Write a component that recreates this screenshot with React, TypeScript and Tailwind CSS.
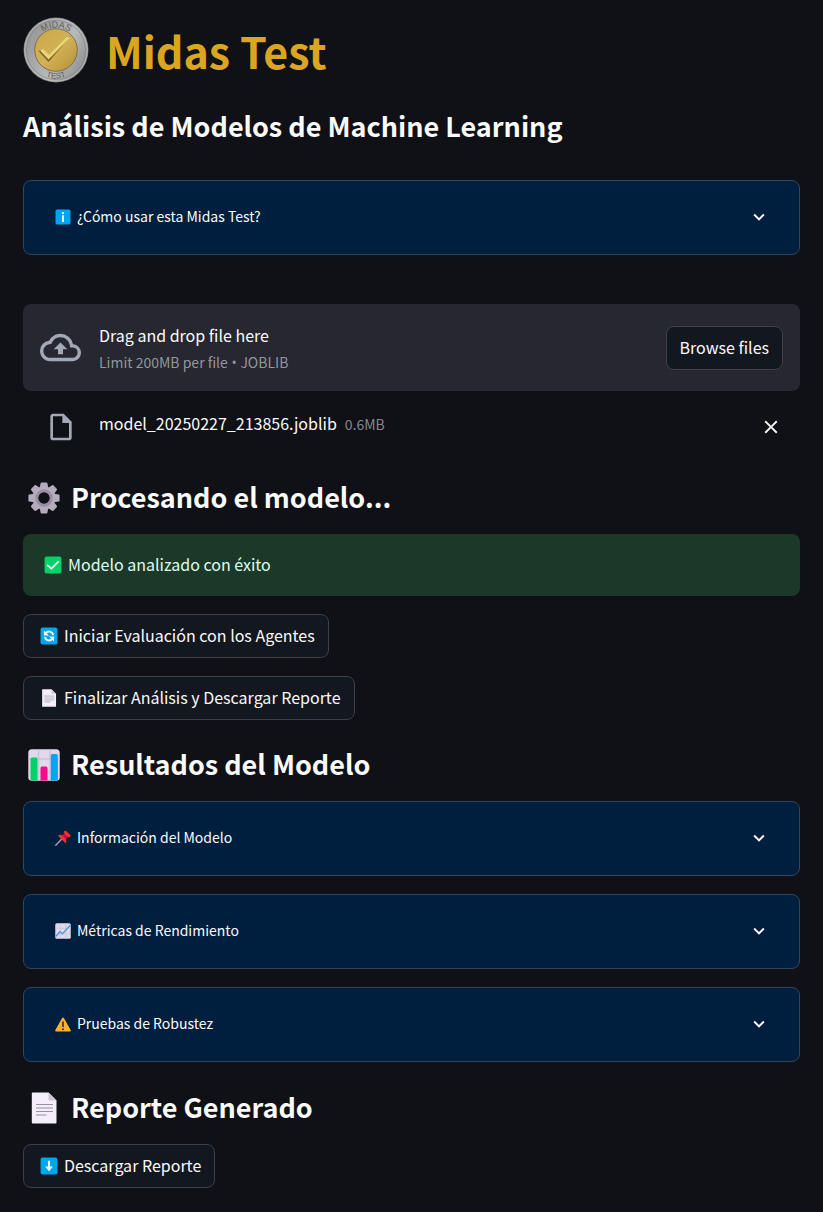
import { useState, type ReactNode } from "react";

type IconProps = { className?: string };

function Coin() {
  return (
    <svg viewBox="0 0 66 66" className="size-[66px] shrink-0" role="img" aria-label="Midas Test">
      <defs>
        <linearGradient id="silver" x1="0" y1="0.2" x2="1" y2="0.8">
          <stop offset="0" stopColor="#929394" />
          <stop offset="0.6" stopColor="#b9babb" />
          <stop offset="1" stopColor="#8b8c8d" />
        </linearGradient>
        <linearGradient id="gold" x1="0" y1="0" x2="1" y2="1">
          <stop offset="0" stopColor="#c9a548" />
          <stop offset="0.5" stopColor="#d2b257" />
          <stop offset="1" stopColor="#b48f37" />
        </linearGradient>
        <path id="arcTop" d="M10.500 33a22.500 22.500 0 0 1 45 0" />
        <path id="arcBottom" d="M4.500 33a28.500 28.500 0 0 0 57 0" />
      </defs>
      <circle cx="33" cy="33" r="32.500" fill="#77797a" />
      <circle cx="33" cy="33" r="31.300" fill="url(#silver)" stroke="#c6c7c8" strokeWidth="0.800" />
      <circle cx="33" cy="33" r="29.500" fill="none" stroke="#858688" strokeWidth="0.700" />
      <circle cx="33" cy="33" r="21.300" fill="url(#gold)" stroke="#766b48" strokeWidth="0.900" />
      <path d="M15.500 34l3.500-1.500 6.500 7L43 20.500l4.500-1L25.500 45z" fill="#7d622a" />
      <path d="M17 33.500l3-1.800 6 6.200L43.500 20l4 .2L25.500 42.500z" fill="#ead672" />
      <g fill="#5c5e60" fontFamily="Liberation Sans, sans-serif" fontSize="9" textAnchor="middle">
        <text><textPath href="#arcTop" startOffset="50%">MIDAS</textPath></text>
        <text fontSize="8"><textPath href="#arcBottom" startOffset="50%">TEST</textPath></text>
      </g>
    </svg>
  );
}

function InfoIcon({ className }: IconProps) {
  return (
    <svg viewBox="0 0 32 32" className={className} aria-hidden="true">
      <rect x="1" y="1" width="30" height="30" rx="3.500" fill="#00a6ed" />
      <path d="M14.200 6h3.800v4h-3.800zM14.200 12.500h3.800V26h-3.800z" fill="#fff" />
    </svg>
  );
}

function GearIcon({ className }: IconProps) {
  return (
    <svg viewBox="0 0 32 32" className={className} aria-hidden="true">
      <g fill="#b4acbc">
        {[0, 45, 90, 135].map((angle) => (
          <path
            key={angle}
            d="M13.600.4h4.800a1 1 0 0 1 1 .8L20.600 8v16l-1.200 6.800a1 1 0 0 1-1 .8h-4.800a1 1 0 0 1-1-.8L11.400 24V8l1.200-6.800a1 1 0 0 1 1-.8z"
            transform={`rotate(${angle} 16 16)`}
          />
        ))}
        <circle cx="16" cy="16" r="11.500" />
      </g>
      <circle cx="16" cy="16" r="7.200" fill="#101116" stroke="#998ea4" strokeWidth="3" />
    </svg>
  );
}

function CheckIcon({ className }: IconProps) {
  return (
    <svg viewBox="0 0 32 32" className={className} aria-hidden="true">
      <rect x="1" y="1" width="30" height="30" rx="3.500" fill="#00d26a" />
      <path d="M6.500 16.500l6.500 6 12.500-12.500" fill="none" stroke="#fff" strokeWidth="3" strokeLinecap="round" strokeLinejoin="round" />
    </svg>
  );
}

function RefreshIcon({ className }: IconProps) {
  return (
    <svg viewBox="0 0 32 32" className={className} aria-hidden="true">
      <rect x="1" y="1" width="30" height="30" rx="3.500" fill="#00a6ed" />
      <g fill="none" stroke="#fff" strokeWidth="3.400">
        <path d="M10.500 10.500c4-4 11-3 13 3.500" />
        <path d="M21.500 21.500c-4 4-11 3-13-3.500" />
      </g>
      <path d="M7 6v9h9zM25 26v-9h-9z" fill="#fff" />
    </svg>
  );
}

function PageIcon({ className }: IconProps) {
  return (
    <svg viewBox="0 0 32 32" className={className} aria-hidden="true">
      <path d="M4.800.5h15.700L28.500 8.500v22a1 1 0 0 1-1 1H4.800a1 1 0 0 1-1-1v-29a1 1 0 0 1 1-1z" fill="#f3eef8" />
      <path d="M20.500.5l8 8h-7a1 1 0 0 1-1-1z" fill="#cdc4d6" />
      <path d="M8.500 12.500h16M8.500 16h16M8.500 19.500h16M8.500 23h9.500" stroke="#998ea4" strokeWidth="1.100" strokeLinecap="round" />
    </svg>
  );
}

function BarsIcon({ className }: IconProps) {
  return (
    <svg viewBox="0 0 32 32" className={className} aria-hidden="true">
      <rect x=".3" y=".3" width="31.400" height="31.400" rx="3.500" fill="#e1d8ec" />
      <path d="M10.500.5v31M22 .5v31M.5 10h31M.5 22.500h31" stroke="#cdc4d6" strokeWidth="1.500" />
      <path d="M2.500 31.500V10a1.500 1.500 0 0 1 1.500-1.500h4A1.500 1.500 0 0 1 9.500 10v21.500z" fill="#00d26a" />
      <path d="M12.500 31.500V19a1.500 1.500 0 0 1 1.500-1.500h4a1.500 1.500 0 0 1 1.500 1.500v12.500z" fill="#f70a8d" />
      <path d="M22.800 31.500V6.500A1.500 1.500 0 0 1 24.300 5h4a1.500 1.500 0 0 1 1.500 1.500v25z" fill="#00a6ed" />
    </svg>
  );
}

function PinIcon({ className }: IconProps) {
  return (
    <svg viewBox="0 0 32 32" className={className} aria-hidden="true">
      <path d="M1.500 30.500L13 18.500" stroke="#b4acbc" strokeWidth="2.400" strokeLinecap="round" />
      <path d="M13 11l8.500-5.500 6 6L21 20z" fill="#ca0b4a" />
      <path d="M6 11.500c2-3 6.500-3 9 0l5.500 5.500c3 3 3 7 .5 9.500zM18.500 2.500c1-1.500 3-1.500 4.500 0l7 7c1.500 1.500 1.500 3.500 0 4.500-1 .8-3 .5-4 0L18.500 6.500c-.8-1-.8-3 0-4z" fill="#f8312f" />
    </svg>
  );
}

function TrendIcon({ className }: IconProps) {
  return (
    <svg viewBox="0 0 32 32" className={className} aria-hidden="true">
      <rect x=".5" y=".5" width="31" height="31" rx="3" fill="#e1d8ec" />
      <path d="M10.500 1v30M21.500 1v30M1 10.500h30M1 21.500h30" stroke="#cdc4d6" strokeWidth="1.500" />
      <path d="M1.500 27L10 17.500l5 4L30.500 4.500" fill="none" stroke="#3f9fe0" strokeWidth="2.600" />
    </svg>
  );
}

function WarningIcon({ className }: IconProps) {
  return (
    <svg viewBox="0 0 32 32" className={className} aria-hidden="true">
      <path d="M14.300 4c.8-1.400 2.600-1.400 3.400 0l13.600 24c.8 1.400-.2 3-1.700 3H2.400C.9 31-.1 29.400.7 28z" fill="#ffb02e" />
      <path d="M16 12v9" stroke="#321b41" strokeWidth="3" strokeLinecap="round" />
      <circle cx="16" cy="26.500" r="1.900" fill="#321b41" />
    </svg>
  );
}

function DownIcon({ className }: IconProps) {
  return (
    <svg viewBox="0 0 32 32" className={className} aria-hidden="true">
      <rect x="1" y="1" width="30" height="30" rx="3.500" fill="#00a6ed" />
      <path d="M14.200 6.500h3.600V17h5.200l-7 8.500-7-8.500h5.200z" fill="#fff" />
    </svg>
  );
}

function Glyph({ d, className }: { d: string; className: string }) {
  return (
    <svg viewBox="0 0 24 24" className={className} fill="currentColor" aria-hidden="true">
      <path d={d} />
    </svg>
  );
}

const CLOUD =
  "M19.350 10.040A7.490 7.490 0 0 0 12 4C9.110 4 6.600 5.640 5.350 8.040A5.994 5.994 0 0 0 0 14c0 3.310 2.690 6 6 6h13c2.760 0 5-2.240 5-5 0-2.640-2.050-4.780-4.650-4.960zM19 18H6c-2.210 0-4-1.790-4-4 0-2.050 1.530-3.760 3.560-3.970l1.070-.11.5-.95A5.469 5.469 0 0 1 12 6c2.620 0 4.880 1.860 5.390 4.430l.3 1.500 1.530.11A2.980 2.980 0 0 1 22 15c0 1.650-1.350 3-3 3zM8 13h2.550v3h2.900v-3H16l-4-4z";
const FILE =
  "M14 2H6c-1.100 0-1.990.9-1.990 2L4 20c0 1.100.89 2 1.990 2H18c1.100 0 2-.9 2-2V8l-6-6zM6 20V4h7v5h5v11H6z";
const CLOSE =
  "M19 6.410L17.590 5 12 10.590 6.410 5 5 6.410 10.590 12 5 17.590 6.410 19 12 13.410 17.590 19 19 17.590 13.410 12z";
const CHEVRON = "M7.410 8.590L12 13.170l4.590-4.580L18 10l-6 6-6-6z";

function Expander({ icon, title }: { icon: ReactNode; title: string }) {
  const [open, setOpen] = useState(false);
  return (
    <button
      type="button"
      aria-expanded={open}
      onClick={() => setOpen(!open)}
      className="flex w-full items-center gap-[6px] rounded-lg border border-[#2f4661] bg-[#001f3f] pt-[25px] pr-[29px] pb-[26px] pl-[31px] text-left text-sm leading-[20px]"
    >
      {icon}
      <span className="grow pb-[2px]">{title}</span>
      <Glyph d={CHEVRON} className={open ? "size-[22px] rotate-180" : "size-[22px]"} />
    </button>
  );
}

function ActionButton({ icon, children }: { icon?: ReactNode; children: ReactNode }) {
  return (
    <button
      type="button"
      className="flex shrink-0 items-center gap-[6px] rounded-lg border border-[#3d4046] bg-[#131720] px-[13px] py-2 text-base leading-6"
    >
      {icon}
      <span className="pb-[2px]">{children}</span>
    </button>
  );
}

function SectionTitle({ icon, children }: { icon: ReactNode; children: ReactNode }) {
  return (
    <h2 className="flex items-center gap-[11px] pl-[5px] text-[27px] leading-[34px] font-semibold">
      {icon}
      <span className="pb-[2px]">{children}</span>
    </h2>
  );
}

export default function App() {
  const [hasFile, setHasFile] = useState(true);
  return (
    <div className="min-h-screen bg-[#101116] font-['Noto_Sans_CJK_SC','Noto_Sans',sans-serif] text-[#fafafa]">
      <main className="px-[23px] pt-[17px] pb-6">
        <header className="flex items-center gap-[17px]">
          <Coin />
          <h1 className="text-[43px] leading-[66px] font-bold text-[#daa520]">Midas Test</h1>
        </header>
        <h2 className="mt-[25px] text-[27px] leading-9 font-semibold">Análisis de Modelos de Machine Learning</h2>

        <div className="mt-9">
          <Expander icon={<InfoIcon className="size-4" />} title="¿Cómo usar esta Midas Test?" />
        </div>

        <section className="mt-[49px] flex items-center rounded-lg bg-[#262730] px-[17px] py-[19px]">
          <Glyph d={CLOUD} className="mr-[18px] size-[41px] shrink-0 text-[#a3a8b8]" />
          <div className="grow">
            <p className="text-base leading-6">Drag and drop file here</p>
            <p className="pt-[6px] text-sm leading-[18px] text-[#95969b]">
              Limit 200MB per file<span className="font-['Open_Sans',sans-serif]"> • </span>JOBLIB
            </p>
          </div>
          <ActionButton>Browse files</ActionButton>
        </section>

        <div className="flex h-[72px] items-center pr-[18px] pl-[22px]">
          {hasFile && (
            <>
              <Glyph d={FILE} className="mr-[22px] size-8 shrink-0 text-[#a3a8b8]" />
              <p className="flex grow items-baseline gap-2 pb-2 text-base leading-6">
                model_20250227_213856.joblib <small className="text-sm text-[#84868b]">0.6MB</small>
              </p>
              <button type="button" aria-label="Quitar archivo" onClick={() => setHasFile(false)}>
                <Glyph d={CLOSE} className="size-[22px]" />
              </button>
            </>
          )}
        </div>

        <div className="mt-[17px] flex flex-col gap-[18px]">
          <SectionTitle icon={<GearIcon className="size-8" />}>Procesando el modelo...</SectionTitle>
          <div role="status" className="flex items-center gap-[6px] rounded-lg bg-[#1c3829] px-[21px] py-[18px] text-base leading-6 text-[#dffde9]">
            <CheckIcon className="size-[18px]" />
            <span className="pb-[2px]">Modelo analizado con éxito</span>
          </div>
          <div className="flex">
            <ActionButton icon={<RefreshIcon className="ml-[3px] size-[18px]" />}>Iniciar Evaluación con los Agentes</ActionButton>
          </div>
          <div className="flex">
            <ActionButton icon={<PageIcon className="ml-[3px] size-[18px]" />}>Finalizar Análisis y Descargar Reporte</ActionButton>
          </div>
          <div className="mt-[9px]">
            <SectionTitle icon={<BarsIcon className="size-8" />}>Resultados del Modelo</SectionTitle>
          </div>
          <Expander icon={<PinIcon className="size-4" />} title="Información del Modelo" />
          <Expander icon={<TrendIcon className="size-4" />} title="Métricas de Rendimiento" />
          <Expander icon={<WarningIcon className="size-4" />} title="Pruebas de Robustez" />
          <div className="mt-[10px]">
            <SectionTitle icon={<PageIcon className="size-8" />}>Reporte Generado</SectionTitle>
          </div>
          <div className="flex">
            <ActionButton icon={<DownIcon className="ml-[3px] size-[18px]" />}>Descargar Reporte</ActionButton>
          </div>
        </div>
      </main>
    </div>
  );
}
